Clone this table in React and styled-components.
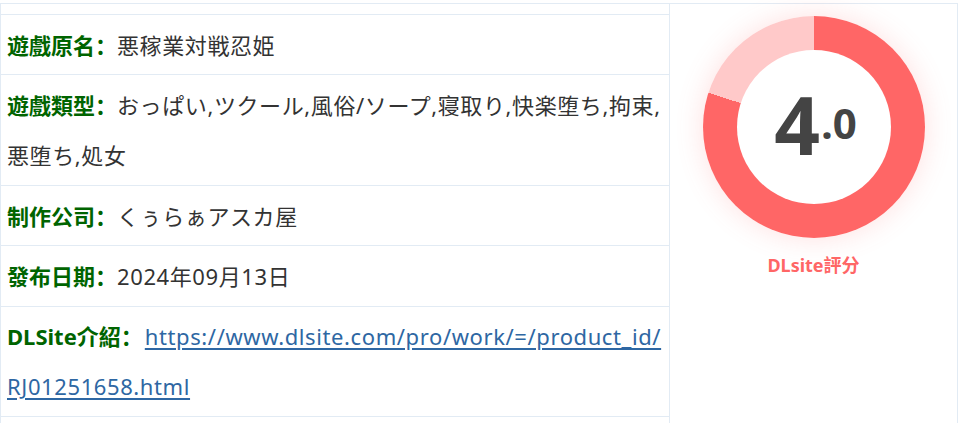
import React from "react";
import styled, { createGlobalStyle } from "styled-components";

const Global = createGlobalStyle`
  html, body { margin: 0; padding: 0; background: #fff; }
  body { font-family: "Noto Sans", "Noto Sans CJK SC", sans-serif; }
`;

const Page = styled.div`
  padding-top: 3px;
  width: 958px;
`;

const Table = styled.div`
  display: grid;
  grid-template-columns: 669px 1fr;
  border: 1px solid #e2ebf4;
  border-bottom: none;
  min-height: 420px;
`;

const InfoCell = styled.div`
  padding-top: 10px;
  border-right: 1px solid #e2ebf4;
`;

const InfoList = styled.ul`
  list-style: none;
  margin: 0;
  padding: 0;
  border-bottom: 1px solid #e2ebf4;
`;

const Row = styled.li`
  border-top: 1px solid #e2ebf4;
  padding: 4.8px 6px 4.6px 6px;
  font-size: 22px;
  line-height: 50px;
  color: #333;
  letter-spacing: 0.6px;
`;

const Label = styled.b`
  color: #006400;
  font-weight: 700;
  letter-spacing: 0;
`;

const Link = styled.a`
  color: #2e67a3;
  text-decoration: underline;
  text-underline-offset: 3px;
  margin-left: 2px;
`;

const ScoreCell = styled.div`
  display: flex;
  flex-direction: column;
  align-items: center;
  padding-top: 12px;
`;

const Donut = styled.div`
  width: 222px;
  height: 222px;
  border-radius: 50%;
  background: conic-gradient(#ff6666 0 80%, #ffc9c9 80% 100%);
  box-shadow: 0 0 28px rgba(255, 102, 102, 0.2);
  display: flex;
  align-items: center;
  justify-content: center;
`;

const Hole = styled.div`
  width: 154px;
  height: 154px;
  border-radius: 50%;
  background: #fff;
  display: flex;
  align-items: center;
  justify-content: center;
`;

const Score = styled.div`
  font-family: "Open Sans", "Noto Sans", sans-serif;
  font-weight: 700;
  color: #444;
  font-size: 80px;
  line-height: 1;
  margin-top: -6px;
  margin-left: 4px;
`;

const Decimal = styled.span`
  font-size: 42px;
  vertical-align: 16px;
  margin-left: 1px;
`;

const ScoreLabel = styled.div`
  margin-top: 15px;
  color: #ff6666;
  font-weight: 700;
  font-size: 18px;
  line-height: 24px;
`;

export default function App() {
  return (
    <>
      <Global />
      <Page>
        <Table>
          <InfoCell>
            <InfoList>
              <Row>
                <Label>遊戲原名：</Label>悪稼業対戦忍姫
              </Row>
              <Row>
                <Label>遊戲類型：</Label>おっぱい,ツクール,風俗/ソープ,寝取り,快楽堕ち,拘束,悪堕ち,処女
              </Row>
              <Row>
                <Label>制作公司：</Label>くぅらぁアスカ屋
              </Row>
              <Row>
                <Label>發布日期：</Label>2024年09月13日
              </Row>
              <Row>
                <Label>DLSite介紹：</Label>
                <Link href="#">https://www.dlsite.com/pro/work/=/product_id/<wbr />RJ01251658.html</Link>
              </Row>
            </InfoList>
          </InfoCell>
          <ScoreCell>
            <Donut>
              <Hole>
                <Score>
                  4<Decimal>.0</Decimal>
                </Score>
              </Hole>
            </Donut>
            <ScoreLabel>DLsite評分</ScoreLabel>
          </ScoreCell>
        </Table>
      </Page>
    </>
  );
}
